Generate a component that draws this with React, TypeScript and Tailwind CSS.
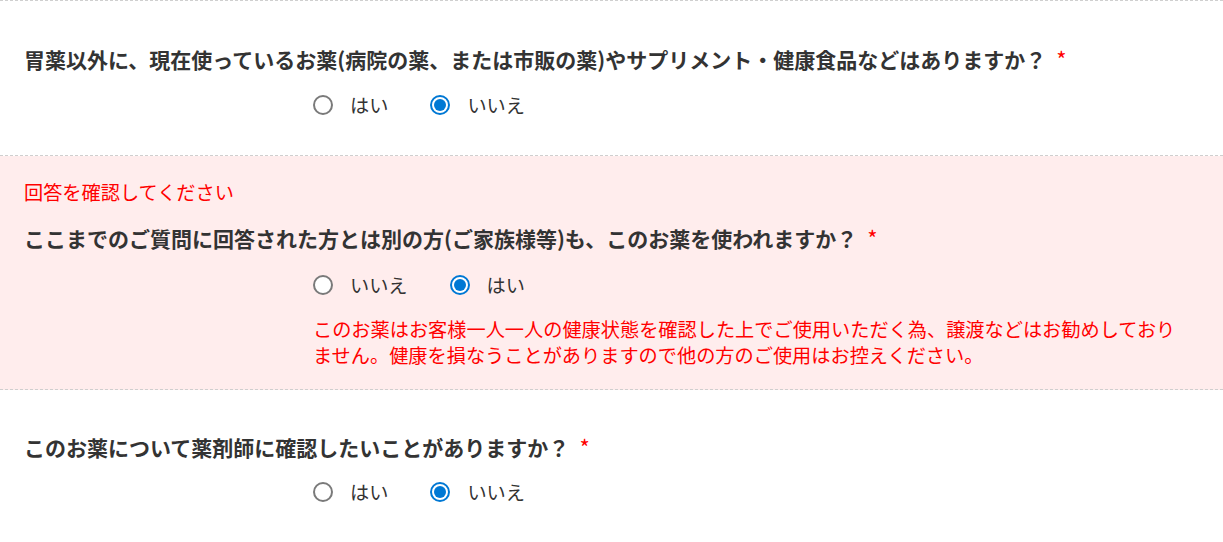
import { useState } from 'react';

type Option = { value: string; label: string };

const FONT = '"Noto Sans CJK JP", "Noto Sans", sans-serif';

function Radio({ checked, label, onClick }: { checked: boolean; label: string; onClick: () => void }) {
  return (
    <button type="button" onClick={onClick} className="flex items-center h-[30px]">
      {checked ? (
        <span className="w-[20px] h-[20px] rounded-full border-2 border-[#0078d4] bg-white flex items-center justify-center">
          <span className="w-[12px] h-[12px] rounded-full bg-[#0078d4]" />
        </span>
      ) : (
        <span className="w-[20px] h-[20px] rounded-full border-2 border-[#7a7a7a] bg-white" />
      )}
      <span className="ml-[17px] text-[19.2px] leading-[30px] text-[#333]">{label}</span>
    </button>
  );
}

function RadioGroup({ options, initial }: { options: Option[]; initial: string }) {
  const [value, setValue] = useState(initial);
  return (
    <div className="pl-[313px] flex gap-[42px]">
      {options.map((o) => (
        <Radio key={o.value} checked={value === o.value} label={o.label} onClick={() => setValue(o.value)} />
      ))}
    </div>
  );
}

function Question({ text }: { text: string }) {
  return (
    <p className="px-[24px] text-[21px] leading-[30px] font-bold text-[#333]">
      {text}
      <span className="ml-[10px] text-[22px] font-normal text-[#ff0000]">*</span>
    </p>
  );
}

const yesNo: Option[] = [
  { value: 'yes', label: 'はい' },
  { value: 'no', label: 'いいえ' },
];

const noYes: Option[] = [
  { value: 'no', label: 'いいえ' },
  { value: 'yes', label: 'はい' },
];

export default function App() {
  return (
    <div className="w-[1223px] h-[542px] overflow-hidden bg-white" style={{ fontFamily: FONT }}>
      <div className="border-t border-dashed border-[#cfcfcf] divide-y divide-dashed divide-[#cfcfcf]">
        <section className="pt-[42px] pb-[35px]">
          <Question text="胃薬以外に、現在使っているお薬(病院の薬、または市販の薬)やサプリメント・健康食品などはありますか？" />
          <div className="mt-[16px]">
            <RadioGroup options={yesNo} initial="no" />
          </div>
        </section>

        <section className="bg-[#ffeded] pt-[22px] pb-[21px]">
          <p className="px-[24px] text-[19.2px] leading-[28px] text-[#ff0000]">回答を確認してください</p>
          <div className="mt-[16px]">
            <Question text="ここまでのご質問に回答された方とは別の方(ご家族様等)も、このお薬を使われますか？" />
          </div>
          <div className="mt-[17px]">
            <RadioGroup options={noYes} initial="yes" />
          </div>
          <p className="mt-[16px] pl-[313px] pr-[40px] text-[19.2px] leading-[26px] text-[#ff0000]">
            このお薬はお客様一人一人の健康状態を確認した上でご使用いただく為、譲渡などはお勧めしておりません。健康を損なうことがありますので他の方のご使用はお控えください。
          </p>
        </section>

        <section className="pt-[41px] pb-[35px]">
          <Question text="このお薬について薬剤師に確認したいことがありますか？" />
          <div className="mt-[15px]">
            <RadioGroup options={yesNo} initial="no" />
          </div>
        </section>
      </div>
    </div>
  );
}
